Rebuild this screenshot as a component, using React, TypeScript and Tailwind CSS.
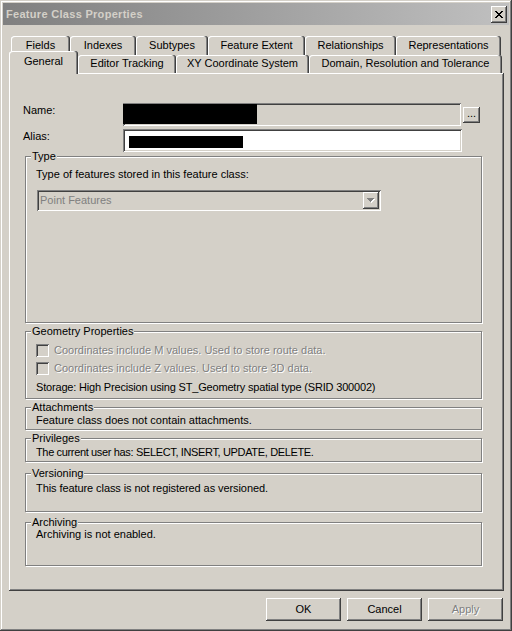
import type { ReactNode } from 'react';

// classic 3D frame styles
const raised =
  'shadow-[inset_-1px_-1px_#404040,inset_1px_1px_#ffffff,inset_-2px_-2px_#808080,inset_2px_2px_#d4d0c8]';
const sunken =
  'shadow-[inset_1px_1px_#808080,inset_-1px_-1px_#ffffff,inset_2px_2px_#404040,inset_-2px_-2px_#d4d0c8]';
const disabledText = 'text-[#808080] [text-shadow:1px_1px_0_#ffffff]';

const backTabs = [
  { label: 'Fields', w: 'w-[59px]' },
  { label: 'Indexes', w: 'w-[66px]' },
  { label: 'Subtypes', w: 'w-[72px]' },
  { label: 'Feature Extent', w: 'w-[97px]' },
  { label: 'Relationships', w: 'w-[91px]' },
  { label: 'Representations', w: 'w-[105px]' },
];

const frontTabs = [
  { label: 'Editor Tracking', w: 'w-[98px]' },
  { label: 'XY Coordinate System', w: 'w-[133px]' },
  { label: 'Domain, Resolution and Tolerance', w: 'w-[193px]' },
];

function Tab({ label, className }: { label: string; className: string }) {
  return (
    <div
      className={`flex justify-center rounded-t-[3px] bg-[#d4d0c8] shadow-[inset_-1px_0_#404040,inset_-2px_0_#808080,inset_1px_1px_#ffffff] ${className}`}
    >
      {label}
    </div>
  );
}

function Group({ title, className, children }: { title: string; className: string; children?: ReactNode }) {
  return (
    <div
      className={`relative ml-[16px] w-[457px] border border-[#808080] shadow-[1px_1px_0_#ffffff,inset_1px_1px_0_#ffffff] ${className}`}
    >
      <span className="absolute left-[5px] top-[-7px] bg-[#d4d0c8] px-px">{title}</span>
      {children}
    </div>
  );
}

function CloseGlyph() {
  // 8x7 pixel X, two pixels wide per row
  const rows = [0, 1, 2, 3, 4, 5, 6];
  return (
    <svg width="8" height="7" viewBox="0 0 8 7" shapeRendering="crispEdges">
      {rows.map((i) => (
        <g key={i} fill="#000">
          <rect x={i} y={i} width="2" height="1" />
          <rect x={6 - i} y={i} width="2" height="1" />
        </g>
      ))}
    </svg>
  );
}

function Checkbox({ label }: { label: string }) {
  return (
    <div className="flex h-[13px] items-center gap-[5px]">
      <div className={`h-[13px] w-[13px] shrink-0 bg-[#d4d0c8] ${sunken}`} />
      <span className={disabledText}>{label}</span>
    </div>
  );
}

function Button({ label, disabled }: { label: string; disabled?: boolean }) {
  return (
    <div className={`flex h-[23px] w-[75px] items-center justify-center ${raised}`}>
      <span className={disabled ? disabledText : ''}>{label}</span>
    </div>
  );
}

export default function App() {
  return (
    <div className="h-[631px] w-[512px] bg-[#d4d0c8] p-[3px] font-['Liberation_Sans',Arial,sans-serif] text-[11px] leading-[13px] text-black shadow-[inset_-1px_-1px_#404040,inset_1px_1px_#d4d0c8,inset_-2px_-2px_#808080,inset_2px_2px_#ffffff]">
      {/* caption */}
      <div className="flex h-[22px] items-center justify-between bg-linear-to-r from-[#808080] to-[#c0c0c0] pl-[3px] pr-[2px]">
        <span className="font-bold tracking-[0.3px] text-[#d4d0c8]">Feature Class Properties</span>
        <div className={`flex h-[17px] w-[16px] items-center justify-center bg-[#d4d0c8] ${raised}`}>
          <CloseGlyph />
        </div>
      </div>

      {/* tab strip */}
      <div className="ml-[8px] mt-[11px] flex h-[19px]">
        {backTabs.map((t) => (
          <Tab key={t.label} label={t.label} className={`${t.w} h-[19px] pt-[3px]`} />
        ))}
      </div>
      <div className="ml-[6px] mt-[-4px] flex h-[22px] items-end">
        <Tab label="General" className="relative z-10 mb-[-1px] h-[23px] w-[69px] pt-[4px]" />
        {frontTabs.map((t) => (
          <Tab key={t.label} label={t.label} className={`${t.w} h-[18px] pt-[2px]`} />
        ))}
      </div>

      {/* General page */}
      <div className={`ml-[6px] h-[518px] w-[495px] pt-[30px] ${raised}`}>
        <div className="flex pl-[14px]">
          <div className="w-[100px] pt-[1px]">Name:</div>
          <div className={`h-[23px] w-[338px] bg-[#d4d0c8] pt-[1px] ${sunken}`}>
            <div className="h-[20px] w-[134px] bg-black" />
          </div>
          <div className={`ml-[2px] mt-[4px] flex h-[16px] w-[17px] items-center justify-center pb-[3px] ${raised}`}>
            ...
          </div>
        </div>
        <div className="mt-[3px] flex pl-[14px]">
          <div className="w-[100px] pt-[1px]">Alias:</div>
          <div className={`h-[23px] w-[339px] bg-white pl-[6px] pt-[7px] ${sunken}`}>
            <div className="h-[12px] w-[114px] bg-black" />
          </div>
        </div>

        <Group title="Type" className="mt-[4px] h-[167px] pl-[10px] pt-[11px]">
          <div>Type of features stored in this feature class:</div>
          <div className={`ml-[1px] mt-[9px] flex h-[21px] w-[344px] items-center justify-between pl-[3px] pr-[2px] ${sunken}`}>
            <span className="text-[#808080]">Point Features</span>
            <div className={`flex h-[17px] w-[16px] items-center justify-center ${raised}`}>
              <svg width="8" height="5" viewBox="0 0 8 5" shapeRendering="crispEdges">
                <path d="M1 1h7v1h-1v1h-1v1h-1v1h-1v-1h-1v-1h-1v-1h-1z" fill="#ffffff" />
                <path d="M0 0h7v1h-1v1h-1v1h-1v1h-1v-1h-1v-1h-1v-1h-1z" fill="#808080" />
              </svg>
            </div>
          </div>
        </Group>

        <Group title="Geometry Properties" className="mt-[8px] h-[68px] pl-[10px] pt-[12px]">
          <Checkbox label="Coordinates include M values. Used to store route data." />
          <div className="mt-[5px]">
            <Checkbox label="Coordinates include Z values. Used to store 3D data." />
          </div>
          <div className="mt-[6px] tracking-[-0.18px]">
            Storage: High Precision using ST_Geometry spatial type (SRID 300002)
          </div>
        </Group>

        <Group title="Attachments" className="mt-[8px] h-[23px] pl-[10px] pt-[6px]">
          <div>Feature class does not contain attachments.</div>
        </Group>

        <Group title="Privileges" className="mt-[8px] h-[24px] pl-[10px] pt-[7px]">
          <div className="tracking-[-0.35px]">The current user has: SELECT, INSERT, UPDATE, DELETE.</div>
        </Group>

        <Group title="Versioning" className="mt-[11px] h-[39px] pl-[10px] pt-[8px]">
          <div className="tracking-[-0.08px]">This feature class is not registered as versioned.</div>
        </Group>

        <Group title="Archiving" className="mt-[10px] h-[44px] pl-[10px] pt-[5px]">
          <div>Archiving is not enabled.</div>
        </Group>
      </div>

      {/* dialog buttons */}
      <div className="mt-[7px] flex justify-end gap-[6px] pr-[6px]">
        <Button label="OK" />
        <Button label="Cancel" />
        <Button label="Apply" disabled />
      </div>
    </div>
  );
}
